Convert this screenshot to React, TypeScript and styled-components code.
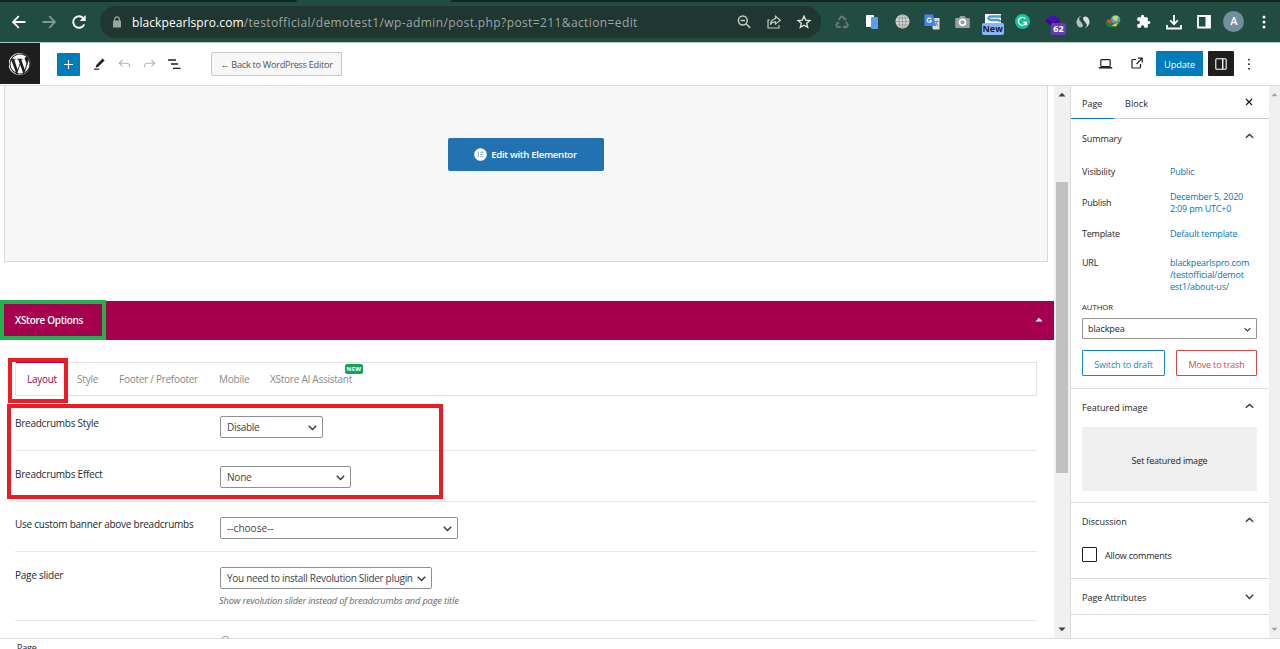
import React from "react";
import styled, { createGlobalStyle, css } from "styled-components";

const Global = createGlobalStyle`
  * { box-sizing: border-box; }
  body { margin: 0; background: #fff; overflow: hidden; font-family: "Open Sans", "Noto Sans", sans-serif; color: #1e1e1e; }
  button { font-family: inherit; }
  svg { flex: none; }
`;

const Screen = styled.div`
  display: flex;
  flex-direction: column;
  width: 1280px;
  height: 649px;
  overflow: hidden;
`;

/* ---------- text ---------- */
const Text = styled.span<{ $size?: number; $ls?: number; $color?: string; $weight?: number; $italic?: boolean; $lh?: number }>`
  font-size: ${(p) => p.$size ?? 9}px;
  letter-spacing: ${(p) => p.$ls ?? -0.2}px;
  color: ${(p) => p.$color ?? "inherit"};
  font-weight: ${(p) => p.$weight ?? 400};
  font-style: ${(p) => (p.$italic ? "italic" : "normal")};
  line-height: ${(p) => p.$lh ?? 12}px;
  white-space: nowrap;
`;

/* ---------- browser chrome ---------- */
const TabStrip = styled.div`
  display: flex;
  flex: none;
  height: 2px;
  background: #214c42;
`;
const StripPart = styled.div<{ $width?: number }>`
  background: #12251f;
  ${(p) => (p.$width ? css`width: ${p.$width}px; border-bottom-right-radius: 2px;` : css`flex: 1; margin-left: 154px; border-bottom-left-radius: 2px;`)}
`;
const BrowserBar = styled.header`
  display: flex;
  align-items: center;
  flex: none;
  height: 41px;
  padding: 0 8px 1px 11px;
  background: #214c42;
  border-bottom: 1px solid #b5c6c1;
`;
const NavButtons = styled.div`
  display: flex;
  gap: 14px;
  width: 89px;
`;
const AddressBar = styled.div`
  display: flex;
  align-items: center;
  width: 721px;
  height: 32px;
  padding: 0 9px 0 12px;
  border-radius: 16px;
  background: #203631;
`;
const Address = styled.div`
  flex: 1;
  padding-left: 10px;
  line-height: 16px;
  white-space: nowrap;
`;
const AddressActions = styled.div`
  display: flex;
  gap: 14px;
`;
const Extensions = styled.div`
  display: flex;
  align-items: center;
  justify-content: space-between;
  flex: 1;
  padding-left: 13px;
`;
const ExtensionSlot = styled.div`
  position: relative;
  display: flex;
  align-items: center;
  justify-content: center;
  width: 16px;
  height: 20px;
`;
const ExtBadge = styled.span<{ $bg: string; $color: string; $left: number; $width: number }>`
  position: absolute;
  top: 11px;
  left: ${(p) => p.$left}px;
  width: ${(p) => p.$width}px;
  height: 12px;
  border-radius: 2px;
  background: ${(p) => p.$bg};
  color: ${(p) => p.$color};
  font: 700 9px/12px "Open Sans", sans-serif;
  text-align: center;
`;
const Avatar = styled.div`
  display: flex;
  flex: none;
  align-items: center;
  justify-content: center;
  width: 21px;
  height: 21px;
  border-radius: 50%;
  background: #758e9b;
  color: #fff;
  font: 500 11px/21px Roboto, sans-serif;
`;

/* ---------- editor header ---------- */
const EditorHeader = styled.div`
  display: flex;
  align-items: center;
  flex: none;
  height: 43px;
  border-bottom: 1px solid #dcdcdc;
  background: #fff;
`;
const WpLogo = styled.div`
  display: flex;
  align-items: center;
  justify-content: center;
  align-self: flex-start;
  width: 40px;
  height: 41px;
  padding-right: 1px;
  background: #1e1e1e;
`;
const Tools = styled.div`
  display: flex;
  align-items: center;
  padding-left: 17px;
`;
const InsertButton = styled.button`
  display: flex;
  align-items: center;
  justify-content: center;
  width: 23px;
  height: 23px;
  margin-right: 11px;
  padding: 0;
  border: 0;
  border-radius: 1px;
  background: #007cba;
`;
const ToolIcons = styled.div`
  display: flex;
  gap: 8px;
  width: 120px;
`;
const BackButton = styled.button`
  display: flex;
  align-items: center;
  justify-content: center;
  width: 131px;
  height: 24px;
  padding: 2px 0 0;
  border: 1px solid #c5c5c5;
  border-radius: 2px;
  background: #f7f7f7;
  color: #555;
`;
const HeaderActions = styled.div`
  display: flex;
  align-items: center;
  margin-left: auto;
  padding: 0 25px 1px 0;
`;
const HeaderIcon = styled.div<{ $right: number }>`
  display: flex;
  margin-right: ${(p) => p.$right}px;
`;
const UpdateButton = styled.button`
  width: 47px;
  height: 25px;
  padding: 1px 0 0;
  border: 0;
  border-radius: 1px;
  background: #007cba;
  color: #fff;
  line-height: 12px;
`;
const SettingsToggle = styled.div`
  display: flex;
  align-items: center;
  justify-content: center;
  width: 26px;
  height: 25px;
  margin: 0 9px 0 5px;
  border-radius: 1px;
  background: #1e1e1e;
`;

/* ---------- body ---------- */
const Body = styled.div`
  display: flex;
  flex: none;
  height: 552px;
`;
const Content = styled.main`
  width: 1054px;
  overflow: hidden;
`;
const Canvas = styled.section`
  display: flex;
  justify-content: center;
  height: 176px;
  margin: 0 6px 39px 4px;
  padding: 52px 1px 0 0;
  border: 1px solid #d9d9d9;
  border-top: 0;
  background: #f7f7f7;
`;
const ElementorButton = styled.button`
  display: flex;
  align-items: center;
  justify-content: center;
  gap: 4px;
  width: 156px;
  height: 33px;
  padding: 0;
  border: 0;
  border-radius: 2px;
  background: #2271b1;
  color: #fff;
`;
const PanelTitle = styled.div`
  position: relative;
  display: flex;
  align-items: center;
  justify-content: space-between;
  height: 39px;
  padding: 0 11px 2px 15px;
  background: #a4004f;
  color: #fff;
`;
const Highlight = styled.div<{ $x: number; $y: number; $w: number; $h: number; $color: string }>`
  position: absolute;
  left: ${(p) => p.$x}px;
  top: ${(p) => p.$y}px;
  width: ${(p) => p.$w}px;
  height: ${(p) => p.$h}px;
  border: 4px solid ${(p) => p.$color};
  pointer-events: none;
`;
const Options = styled.section`
  position: relative;
  padding: 22px 17px 0 15px;
`;
const Tabs = styled.nav`
  display: flex;
  height: 34px;
  border: 1px solid #e1e1e1;
`;
const Tab = styled.div<{ $active?: boolean; $width: number }>`
  position: relative;
  display: flex;
  align-items: center;
  width: ${(p) => p.$width}px;
  padding-left: 11px;
  margin-top: -1px;
  border-top: 1px solid ${(p) => (p.$active ? "#a4004f" : "#e1e1e1")};
  color: ${(p) => (p.$active ? "#a4004f" : "#888")};
`;
const NewBadge = styled.span`
  position: absolute;
  left: 86px;
  top: 1px;
  width: 18px;
  height: 10px;
  border-radius: 2px;
  background: #10a45c;
  color: #fff;
  font: 700 6px/10px "Open Sans", sans-serif;
  letter-spacing: 0.3px;
  text-align: center;
`;
const OptionRow = styled.div<{ $height: number; $pad: number }>`
  display: flex;
  height: ${(p) => p.$height}px;
  padding-top: ${(p) => p.$pad}px;
  border-bottom: 1px solid #e6e6e6;
  color: #23282d;
`;
const OptionLabel = styled.div`
  width: 205px;
  line-height: 12px;
  display: flex;
`;
const Control = styled.div`
  display: flex;
  flex-direction: column;
`;
const SelectBox = styled.div<{ $width: number }>`
  display: flex;
  align-items: center;
  justify-content: space-between;
  width: ${(p) => p.$width}px;
  height: 22px;
  padding: 0 5px 0 6px;
  border: 1px solid #8c8f94;
  border-radius: 2px;
  color: #3c434a;
`;
const Hint = styled.div`
  margin: 6px 0 0 -1px;
  display: flex;
`;
const RadioDot = styled.div`
  width: 11px;
  height: 11px;
  border: 1px solid #8c8f94;
  border-radius: 50%;
`;

const ScrollTrack = styled.div<{ $width: number }>`
  display: flex;
  flex-direction: column;
  align-items: center;
  justify-content: space-between;
  width: ${(p) => p.$width}px;
  padding: 6px 0;
  background: #f0f0f0;
`;
const ScrollThumb = styled.div`
  width: 12px;
  height: 291px;
  margin: 0 0 69px;
  background: #c1c1c1;
`;

/* ---------- sidebar ---------- */
const Sidebar = styled.aside`
  width: 199px;
  border-left: 1px solid #dcdcdc;
`;
const SideTabs = styled.div`
  display: flex;
  height: 33px;
  border-bottom: 1px solid #ccc;
`;
const SideTab = styled.div<{ $active?: boolean; $width: number }>`
  display: flex;
  align-items: center;
  height: 33px;
  width: ${(p) => p.$width}px;
  padding: 3px 0 0 11px;
  ${(p) => p.$active && css`border-bottom: 1.5px solid #007cba;`}
`;
const CloseIcon = styled.div`
  margin: 12px 16px 0 auto;
  line-height: 0;
`;
const SideSection = styled.section<{ $height: number; $pad: number }>`
  height: ${(p) => p.$height}px;
  padding: ${(p) => p.$pad}px 11px 0;
  border-bottom: 1px solid #dcdcdc;
`;
const SectionHead = styled.div`
  display: flex;
  justify-content: space-between;
  padding-right: 4px;
`;
const Field = styled.div<{ $top: number; $center?: boolean }>`
  display: flex;
  align-items: ${(p) => (p.$center ? "center" : "flex-start")};
  margin-top: ${(p) => p.$top}px;
`;
const FieldLabel = styled.div`
  display: flex;
  width: 88px;
`;
const FieldValue = styled.div`
  display: flex;
  flex-direction: column;
  color: #0675b3;
`;
const AuthorLabel = styled.div`
  display: flex;
  margin-top: 8px;
`;
const AuthorSelect = styled.div`
  display: flex;
  align-items: center;
  justify-content: space-between;
  width: 175px;
  height: 21px;
  margin-top: 5px;
  padding: 1px 5px 0;
  border: 1px solid #949494;
  border-radius: 1px;
`;
const ButtonRow = styled.div`
  display: flex;
  justify-content: space-between;
  width: 175px;
  margin-top: 11px;
`;
const OutlineButton = styled.button<{ $color: string; $width: number }>`
  width: ${(p) => p.$width}px;
  height: 26px;
  padding: 2px 0 0;
  border: 1px solid ${(p) => p.$color};
  border-radius: 1px;
  background: #fff;
  color: ${(p) => p.$color};
  line-height: 12px;
`;
const FeaturedImage = styled.div`
  display: flex;
  align-items: center;
  justify-content: center;
  width: 175px;
  height: 64px;
  margin-top: 13px;
  padding-top: 3px;
  background: #efefef;
`;
const CheckRow = styled.div`
  display: flex;
  align-items: center;
  gap: 8px;
  margin-top: 19px;
`;
const CheckLabel = styled.label`
  display: flex;
  padding-top: 2px;
`;
const Checkbox = styled.span`
  width: 15px;
  height: 15px;
  border: 1px solid #1e1e1e;
  border-radius: 1px;
`;
const Footer = styled.footer`
  display: flex;
  flex: none;
  height: 11px;
  padding: 3px 0 0 17px;
  border-top: 1px solid #dcdcdc;
  overflow: hidden;
`;

/* ---------- drawings ---------- */
const Chevron = ({ up, w = 9, stroke = "#32373c" }: { up?: boolean; w?: number; stroke?: string }) => (
  <svg width={w} height={w} viewBox="0 0 9 9" fill="none" stroke={stroke} strokeWidth="1.4">
    <path d={up ? "M.8 5.8 4.5 2.5 8.2 5.8" : "M.8 2.8 4.5 6.4 8.2 2.8"} />
  </svg>
);
const Triangle = ({ up, color, w = 8 }: { up?: boolean; color: string; w?: number }) => (
  <svg width={w} height="5" viewBox="0 0 8 5">
    <path d={up ? "M.5 4.5 4 .8 7.5 4.5z" : "M.5.5 4 4.2 7.5.5z"} fill={color} />
  </svg>
);
const Arrow = ({ back, color }: { back?: boolean; color: string }) => (
  <svg width="16" height="16" viewBox="0 0 16 16" fill="none" stroke={color} strokeWidth="1.8">
    <path d={back ? "M14.5 8H2.2M7.8 2.2 2 8l5.8 5.8" : "M1.5 8h12.3M8.2 2.2 14 8l-5.8 5.8"} />
  </svg>
);

const rows = [
  { label: "Breadcrumbs Style", value: "Disable", vls: -0.3, width: 103, height: 55, pad: 20, lh: 15 },
  { label: "Breadcrumbs Effect", value: "None", vls: -0.2, width: 131, height: 51, pad: 15, lh: 16 },
  { label: "Use custom banner above breadcrumbs", value: "--choose--", vls: 0.05, width: 238, height: 50, pad: 15, lh: 15 },
  { label: "Page slider", value: "You need to install Revolution Slider plugin", vls: -0.3, width: 212, height: 69, pad: 15, lh: 16, hint: "Show revolution slider instead of breadcrumbs and page title" },
];

const App = () => (
  <>
    <Global />
    <Screen>
      <TabStrip><StripPart $width={297} /><StripPart /></TabStrip>
      <BrowserBar>
        <NavButtons>
          <Arrow back color="#fff" />
          <Arrow color="#7f9892" />
          <svg width="16" height="16" viewBox="0 0 16 16" fill="none" stroke="#fff" strokeWidth="1.9">
            <path d="M13.3 10.3A5.8 5.8 0 1 1 12.3 4.1L13.8 5.8" />
            <path d="M14.6 1v6h-6z" fill="#fff" stroke="none" />
          </svg>
        </NavButtons>
        <AddressBar>
          <svg width="10" height="12" viewBox="0 0 10 12">
            <path d="M1 4.5h8v7H1z" fill="#9aa5a2" />
            <path d="M2.7 5V3.2a2.3 2.3 0 0 1 4.6 0V5" fill="none" stroke="#9aa5a2" strokeWidth="1.2" />
          </svg>
          <Address>
            <Text $size={12} $lh={16} $ls={0.08} $color="#fff">blackpearlspro.com</Text>
            <Text $size={12} $lh={16} $ls={0.39} $color="#9aa8a4">/testofficial/demotest1/wp-admin/post.php?post=211&amp;action=edit</Text>
          </Address>
          <AddressActions>
            <svg width="16" height="16" viewBox="0 0 16 16" fill="none" stroke="#c3cbc9" strokeWidth="1.5">
              <circle cx="6.8" cy="6.5" r="4.4" /><path d="M4.6 6.5H9M10 9.7l4.2 4.2" />
            </svg>
            <svg width="16" height="16" viewBox="0 0 16 16" fill="none" stroke="#c3cbc9" strokeWidth="1.2">
              <path d="M4 6H2v8h11v-3M9.500 2.300l4.800 3.900-4.800 3.900V7.800C7 7.700 5.500 8.600 4.400 10.600 4.800 7 6.500 5 9.500 4.600z" />
            </svg>
            <svg width="16" height="16" viewBox="0 0 16 16" fill="none" stroke="#dde2e1" strokeWidth="1.4">
              <path d="m8 2.2 1.7 3.900 4.200.4-3.200 2.800 1 4.100L8 11.200l-3.700 2.200 1-4.100-3.200-2.800 4.200-.4z" />
            </svg>
          </AddressActions>
        </AddressBar>
        <Extensions>
          <ExtensionSlot>
            <svg width="14" height="14" viewBox="0 0 14 14" fill="none" stroke="#6b7774" strokeWidth="2">
              <path d="M3.600 5.200 6 1.700h2l1.600 2.400M10.900 6.800l1.900 3.500-1 1.800H8.800M5.800 12.100H2.200l-1-1.800L2.500 8" />
              <path d="m8.300 5.300 3 .2.200-3zM9.600 9.800v4.200L7.300 12zM.8 7.500l3.200-.8.400 3z" fill="#6b7774" stroke="none" />
            </svg>
          </ExtensionSlot>
          <ExtensionSlot>
            <svg width="12" height="14" viewBox="0 0 12 14"><rect width="8" height="12" rx="1" fill="#fff" /><rect x="5" y="2" width="7" height="12" rx="1" fill="#5a9df5" /></svg>
          </ExtensionSlot>
          <ExtensionSlot>
            <svg width="15" height="15" viewBox="0 0 15 15" fill="none" stroke="#8d9491" strokeWidth=".8">
              <circle cx="7.5" cy="7.5" r="7" fill="#d4d6d5" stroke="none" /><ellipse cx="7.5" cy="7.5" rx="3.4" ry="7" /><path d="M.5 7.5h14M7.5.5v14M1.500 4h12M1.500 11h12" />
            </svg>
          </ExtensionSlot>
          <ExtensionSlot>
            <svg width="16" height="16" viewBox="0 0 16 16">
              <path d="M6 4h9.500v11.500H9z" fill="#d8dad9" /><path d="M.5.5h8.500l3 11.500H.5z" fill="#4285f4" />
              <path d="M7 5A2.100 2.100 0 1 0 7.300 6.800H5.400" fill="none" stroke="#fff" strokeWidth="1.100" /><path d="M10.800 7.500h3.700M12.800 6.700c0 2-.5 3.500-1.300 4.300M11.800 9l2 3" fill="none" stroke="#69767a" strokeWidth=".8" />
            </svg>
          </ExtensionSlot>
          <ExtensionSlot>
            <svg width="15" height="13" viewBox="0 0 15 13"><path d="M1 3h3l1.300-2h4.400L11 3h3q.8 0 .8 1v8q0 .9-.8.9H1q-.8 0-.8-.9V4Q.2 3 1 3z" fill="#9a9d9c" /><circle cx="7.500" cy="7.300" r="3" fill="#9a9d9c" stroke="#fff" strokeWidth="1.700" /></svg>
          </ExtensionSlot>
          <ExtensionSlot>
            <svg width="16" height="18" viewBox="0 0 16 18"><rect y="1" width="16" height="14" fill="#fff" /><path d="M16 3.500H6Q3.500 3.500 3.500 5T6 7h6q3 0 3 2" fill="none" stroke="#4a9fc8" strokeWidth="2.300" /></svg>
            <ExtBadge $bg="#8ab4f8" $color="#202124" $left={-3} $width={22}>New</ExtBadge>
          </ExtensionSlot>
          <ExtensionSlot>
            <svg width="15" height="15" viewBox="0 0 15 15"><circle cx="7.500" cy="7.500" r="7.500" fill="#15c39a" /><path d="M10.400 4.700A4 4 0 1 0 11.200 8.500H8.400M11.300 8.200v2.700" fill="none" stroke="#fff" strokeWidth="1.300" /></svg>
          </ExtensionSlot>
          <ExtensionSlot>
            <svg width="16" height="16" viewBox="0 0 16 16"><path d="M8 .5 14.500 5 8 9 1.500 5z" fill="#4b0fb5" /><path d="M.5 7 2 5l6 4 6.500-4v6L8 14z" fill="#3a0a95" /></svg>
            <ExtBadge $bg="#673ab7" $color="#fff" $left={6} $width={15}>62</ExtBadge>
          </ExtensionSlot>
          <ExtensionSlot>
            <svg width="14" height="14" viewBox="0 0 14 14"><path d="M5.500.8A6.500 6.500 0 0 0 2.200 11.500C5 13.500 8 12 6.500 9L3.500 5Q2.300 2.400 5.500.8z" fill="#b9c0be" /><path d="M8.500 13.200A6.500 6.500 0 0 0 11.800 2.500C9 .5 6 2 7.500 5l3 4q1.200 2.600-2 4.200z" fill="#dadddc" /></svg>
          </ExtensionSlot>
          <ExtensionSlot>
            <svg width="16" height="14" viewBox="0 0 16 14"><circle cx="10.500" cy="5" r="4.800" fill="#4f9ddd" /><path d="M7.500 2q4-3 6 0l-2 4-3-1z" fill="#d5d84c" /><path d="M.5 7q3-4 6-1l1.500 2.500 6.500-2q-1 6-7 6Q.5 12 .5 7z" fill="#267a30" /><path d="M1.500 5.500q4-3 6 1L5 9z" fill="#e34c32" /><path d="m6.500 10.500 7-3.500-2.500 4.500z" fill="#e8c531" /></svg>
          </ExtensionSlot>
          <ExtensionSlot>
            <svg width="15" height="15" viewBox="0 0 24 24" fill="#fff"><path d="M20.500 11H19V7a2 2 0 0 0-2-2h-4V3.500a2.500 2.500 0 0 0-5 0V5H4a2 2 0 0 0-2 2v3.800h1.500a2.700 2.700 0 0 1 0 5.400H2V20a2 2 0 0 0 2 2h3.800v-1.500a2.700 2.700 0 0 1 5.400 0V22H17a2 2 0 0 0 2-2v-4h1.500a2.500 2.500 0 0 0 0-5z" /></svg>
          </ExtensionSlot>
          <ExtensionSlot>
            <svg width="16" height="16" viewBox="0 0 16 16" fill="none" stroke="#fff" strokeWidth="1.800"><path d="M8 1v9M4.200 6.400 8 10.200l3.800-3.800M1 11v3.500h14V11" /></svg>
          </ExtensionSlot>
          <ExtensionSlot>
            <svg width="14" height="14" viewBox="0 0 14 14"><path d="M1 1h12v11.500H1z" fill="none" stroke="#fff" strokeWidth="1.800" /><path d="M8.500 1H13v11.500H8.500z" fill="#fff" /></svg>
          </ExtensionSlot>
          <ExtensionSlot><Avatar>A</Avatar></ExtensionSlot>
          <ExtensionSlot>
            <svg width="4" height="14" viewBox="0 0 4 14" fill="#fff"><circle cx="2" cy="2" r="1.500" /><circle cx="2" cy="7" r="1.500" /><circle cx="2" cy="12" r="1.500" /></svg>
          </ExtensionSlot>
        </Extensions>
      </BrowserBar>

      <EditorHeader>
        <WpLogo>
          <svg width="22" height="22" viewBox="0 0 122.500 122.500" fill="#fff">
            <path d="M8.700 61.300c0 20.800 12.100 38.700 29.600 47.300L13.300 39.900c-2.900 6.500-4.600 13.700-4.600 21.400zM96.700 58.600c0-6.500-2.300-11-4.300-14.500-2.700-4.300-5.200-8-5.200-12.300 0-4.800 3.700-9.300 8.900-9.300h.7C87.400 13.900 75 8.700 61.300 8.700 42.900 8.700 26.800 18.100 17.400 32.400h3.300c5.500 0 14-.7 14-.7 2.800-.2 3.200 4 .3 4.300 0 0-2.800.3-6 .5l19.100 56.900L59.600 59 51.400 36.500c-2.800-.2-5.500-.5-5.500-.5-2.800-.2-2.500-4.500.3-4.300 0 0 8.700.7 13.900.7 5.500 0 14.100-.7 14.100-.7 2.800-.2 3.200 4 .3 4.300 0 0-2.900.3-6 .5l19 56.500 5.200-17.500c2.300-7.300 4-12.500 4-16.900zM62.200 65.900 46.400 111.700c4.700 1.400 9.700 2.200 14.900 2.200 6.100 0 12-1.100 17.500-3l-.4-.7zM107.400 36.100c.2 1.700.4 3.500.4 5.400 0 5.300-1 11.300-4 18.800l-16.100 46.500c15.600-9.100 26.200-26 26.200-45.500 0-9.200-2.300-17.800-6.500-25.200z" />
            <path d="M61.300 0a61.300 61.300 0 1 0 0 122.500A61.300 61.300 0 0 0 61.300 0zm0 119.700a58.500 58.500 0 1 1 0-117 58.500 58.500 0 0 1 0 117z" />
          </svg>
        </WpLogo>
        <Tools>
          <InsertButton><svg width="9" height="9" viewBox="0 0 9 9" stroke="#fff" strokeWidth="1.200"><path d="M4.500 0v9M0 4.500h9" /></svg></InsertButton>
          <ToolIcons>
            <svg width="17" height="16" viewBox="0 0 17 16"><path d="m5.300 9 6.300-6.500 2 2-6.700 6.500-2.300.6z" fill="#1e1e1e" /><path d="M3 13.200h5.300" stroke="#1e1e1e" strokeWidth="1.200" /></svg>
            <svg width="17" height="16" viewBox="0 0 17 16" fill="none" stroke="#b5b5b5" strokeWidth="1.100"><path d="M6.500 4 3.200 7.200l3.300 3.200M3.500 7.200h7.200q3 0 3 4.300" /></svg>
            <svg width="17" height="16" viewBox="0 0 17 16" fill="none" stroke="#b5b5b5" strokeWidth="1.100"><path d="m10.500 4 3.300 3.200-3.300 3.200M13.500 7.200H6.300q-3 0-3 4.300" /></svg>
            <svg width="17" height="16" viewBox="0 0 17 16" stroke="#1e1e1e" strokeWidth="1.300"><path d="M2 4h8M5 8h7M7 12.300h7.500" /></svg>
          </ToolIcons>
          <BackButton><Text $size={9.2} $ls={-0.3}>← Back to WordPress Editor</Text></BackButton>
        </Tools>
        <HeaderActions>
          <HeaderIcon $right={17}><svg width="15" height="12" viewBox="0 0 15 12" fill="none" stroke="#1e1e1e" strokeWidth="1.200"><rect x="2.800" y="1.600" width="9.400" height="7" rx="1" /><path d="M.8 9.800h13.400" strokeWidth="1.500" /></svg></HeaderIcon>
          <HeaderIcon $right={12}><svg width="14" height="13" viewBox="0 0 14 13" fill="none" stroke="#1e1e1e" strokeWidth="1.200"><path d="M7.800 1.200h4.400v4.300M12 1.400 6.500 7M6 2.500H3q-1 0-1 1V10q0 1 1 1h6.500q1 0 1-1V7" /></svg></HeaderIcon>
          <UpdateButton><Text $size={9.3} $ls={-0.15}>Update</Text></UpdateButton>
          <SettingsToggle><svg width="12" height="12" viewBox="0 0 12 12" fill="none" stroke="#fff" strokeWidth="1.100"><rect x=".8" y=".8" width="10.400" height="10.400" rx="1" /><path d="M7.700 1v10" strokeWidth="1.400" /></svg></SettingsToggle>
          <svg width="12" height="12" viewBox="0 0 12 12" fill="#1e1e1e"><circle cx="6" cy="1.700" r=".9" /><circle cx="6" cy="6.200" r=".9" /><circle cx="6" cy="10.700" r=".9" /></svg>
        </HeaderActions>
      </EditorHeader>

      <Body>
        <Content>
          <Canvas>
            <ElementorButton>
              <svg width="13" height="13" viewBox="0 0 13 13"><circle cx="6.500" cy="6.500" r="6.300" fill="#fff" /><path d="M4.300 4v5M6.300 4.300h3M6.300 6.500h3M6.300 8.700h3" stroke="#76a5cf" strokeWidth="1" /></svg>
              <Text $size={9.7} $ls={-0.35} $weight={600}>Edit with Elementor</Text>
            </ElementorButton>
          </Canvas>
          <PanelTitle>
            <Text $size={10} $ls={-0.32} $weight={600}>XStore Options</Text>
            <Triangle up color="#fff" />
            <Highlight $x={0} $y={-1} $w={106} $h={40} $color="#22b14c" />
          </PanelTitle>
          <Options>
            <Tabs>
              <Tab $active $width={50}><Text $size={10} $ls={-0.28}>Layout</Text></Tab>
              <Tab $width={42}><Text $size={10} $ls={-0.2}>Style</Text></Tab>
              <Tab $width={100}><Text $size={10} $ls={-0.27}>Footer / Prefooter</Text></Tab>
              <Tab $width={51}><Text $size={10} $ls={-0.25}>Mobile</Text></Tab>
              <Tab $width={110}><Text $size={10} $ls={-0.25}>XStore AI Assistant</Text><NewBadge>NEW</NewBadge></Tab>
            </Tabs>
            {rows.map((r) => (
              <OptionRow key={r.label} $height={r.height} $pad={r.pad}>
                <OptionLabel><Text $size={10} $ls={-0.25} $lh={r.lh}>{r.label}</Text></OptionLabel>
                <Control>
                  <SelectBox $width={r.width}><Text $size={10} $ls={r.vls}>{r.value}</Text><Chevron /></SelectBox>
                  {r.hint && <Hint><Text $size={9.3} $ls={-0.17} $italic $color="#666">{r.hint}</Text></Hint>}
                </Control>
              </OptionRow>
            ))}
            <OptionRow $height={40} $pad={15}><OptionLabel /><RadioDot /></OptionRow>
            <Highlight $x={8} $y={18} $w={60} $h={45} $color="#ed1c24" />
            <Highlight $x={7} $y={64} $w={436} $h={95} $color="#ed1c24" />
          </Options>
        </Content>
        <ScrollTrack $width={16}>
          <Triangle up color="#404040" />
          <ScrollThumb />
          <Triangle color="#404040" />
        </ScrollTrack>
        <Sidebar>
          <SideTabs>
            <SideTab $active $width={43}><Text $ls={0} $weight={500}>Page</Text></SideTab>
            <SideTab $width={60}><Text $ls={0.1} $weight={500}>Block</Text></SideTab>
            <CloseIcon><svg width="8" height="8" viewBox="0 0 8 8" stroke="#1e1e1e" strokeWidth="1.300"><path d="m1 1 6 6M7 1 1 7" /></svg></CloseIcon>
          </SideTabs>
          <SideSection $height={270} $pad={13}>
            <SectionHead><Text $ls={-0.1} $weight={500} $lh={13}>Summary</Text><Chevron up /></SectionHead>
            <Field $top={21}><FieldLabel><Text $ls={-0.1}>Visibility</Text></FieldLabel><FieldValue><Text>Public</Text></FieldValue></Field>
            <Field $top={13} $center><FieldLabel><Text>Publish</Text></FieldLabel><FieldValue><Text>December 5, 2020</Text><Text>2:09 pm UTC+0</Text></FieldValue></Field>
            <Field $top={13}><FieldLabel><Text>Template</Text></FieldLabel><FieldValue><Text>Default template</Text></FieldValue></Field>
            <Field $top={17}><FieldLabel><Text>URL</Text></FieldLabel><FieldValue><Text>blackpearlspro.com</Text><Text>/testofficial/demot</Text><Text>est1/about-us/</Text></FieldValue></Field>
            <AuthorLabel><Text $size={7.7} $ls={0}>AUTHOR</Text></AuthorLabel>
            <AuthorSelect><Text $ls={-0.1}>blackpea</Text><Chevron w={7} /></AuthorSelect>
            <ButtonRow>
              <OutlineButton $color="#1a89c3" $width={83}><Text $ls={-0.15}>Switch to draft</Text></OutlineButton>
              <OutlineButton $color="#dc4548" $width={81}><Text $ls={-0.15}>Move to trash</Text></OutlineButton>
            </ButtonRow>
          </SideSection>
          <SideSection $height={114} $pad={13}>
            <SectionHead><Text $ls={0} $weight={500}>Featured image</Text><Chevron up /></SectionHead>
            <FeaturedImage><Text>Set featured image</Text></FeaturedImage>
          </SideSection>
          <SideSection $height={76} $pad={13}>
            <SectionHead><Text $ls={0} $weight={500}>Discussion</Text><Chevron up /></SectionHead>
            <CheckRow><Checkbox /><CheckLabel><Text>Allow comments</Text></CheckLabel></CheckRow>
          </SideSection>
          <SideSection $height={36} $pad={13}>
            <SectionHead><Text $ls={0} $weight={500}>Page Attributes</Text><Chevron /></SectionHead>
          </SideSection>
        </Sidebar>
        <ScrollTrack $width={11}>
          <Triangle up color="#a3a3a3" w={7} />
          <Triangle color="#a3a3a3" w={7} />
        </ScrollTrack>
      </Body>
      <Footer><Text>Page</Text></Footer>
    </Screen>
  </>
);

export default App;
